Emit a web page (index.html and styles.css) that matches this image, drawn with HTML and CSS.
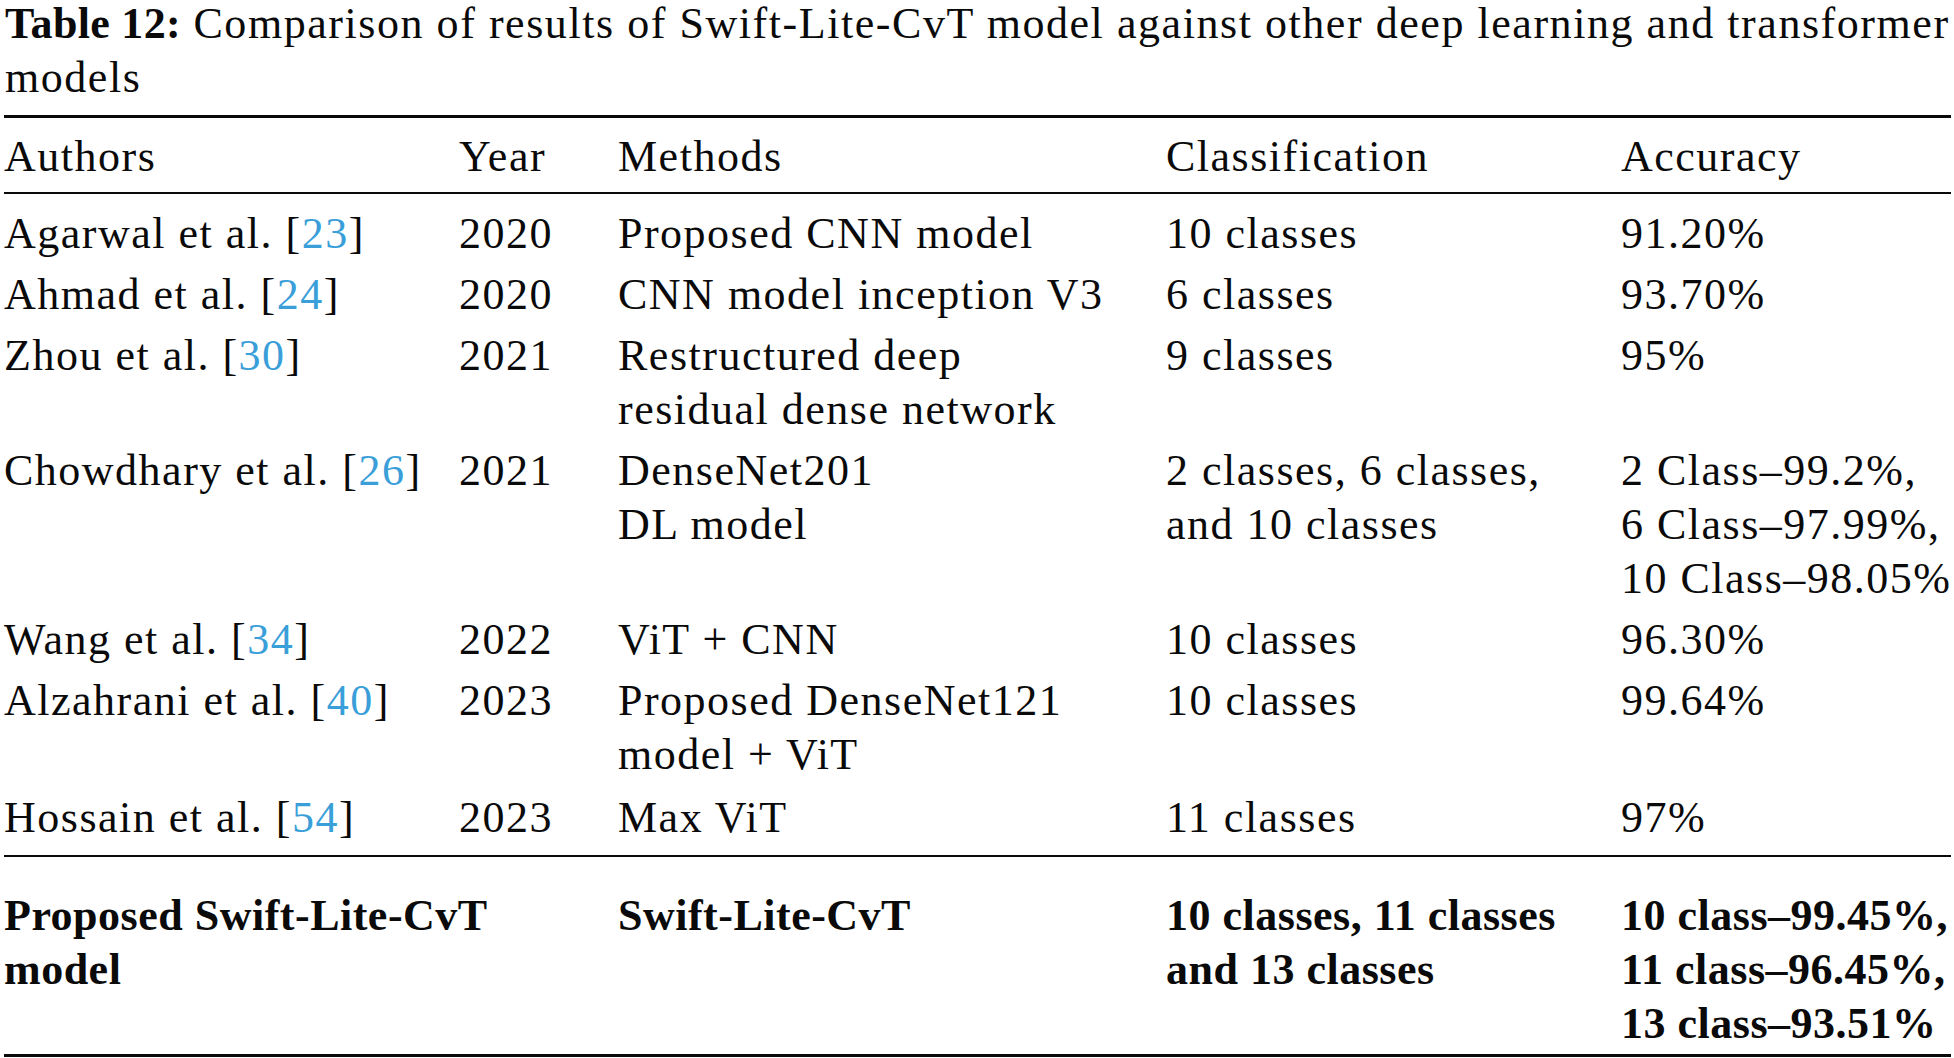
FILE: index.html
```html
<!DOCTYPE html>
<html>
<head>
<meta charset="utf-8">
<link rel="stylesheet" href="styles.css">
</head>
<body>
<div class="page">
  <p class="caption"><b>Table 12:</b> Comparison of results of Swift-Lite-CvT model against other deep learning and transformer<br>models</p>
  <table class="results">
    <colgroup>
      <col class="c-auth"><col class="c-year"><col class="c-meth"><col class="c-cls"><col class="c-acc">
    </colgroup>
    <thead>
      <tr><th>Authors</th><th>Year</th><th>Methods</th><th>Classification</th><th>Accuracy</th></tr>
    </thead>
    <tbody>
      <tr class="first"><td>Agarwal et al. [<span class="ref">23</span>]</td><td>2020</td><td>Proposed CNN model</td><td>10 classes</td><td>91.20%</td></tr>
      <tr><td>Ahmad et al. [<span class="ref">24</span>]</td><td>2020</td><td>CNN model inception V3</td><td>6 classes</td><td>93.70%</td></tr>
      <tr><td>Zhou et al. [<span class="ref">30</span>]</td><td>2021</td><td>Restructured deep<br>residual dense network</td><td>9 classes</td><td>95%</td></tr>
      <tr><td>Chowdhary et al. [<span class="ref">26</span>]</td><td>2021</td><td>DenseNet201<br>DL model</td><td>2 classes, 6 classes,<br>and 10 classes</td><td>2 Class–99.2%,<br>6 Class–97.99%,<br>10 Class–98.05%</td></tr>
      <tr><td>Wang et al. [<span class="ref">34</span>]</td><td>2022</td><td>ViT + CNN</td><td>10 classes</td><td>96.30%</td></tr>
      <tr><td>Alzahrani et al. [<span class="ref">40</span>]</td><td>2023</td><td>Proposed DenseNet121<br>model + ViT</td><td>10 classes</td><td>99.64%</td></tr>
      <tr class="last"><td>Hossain et al. [<span class="ref">54</span>]</td><td>2023</td><td>Max ViT</td><td>11 classes</td><td>97%</td></tr>
      <tr class="proposed"><td colspan="2">Proposed Swift-Lite-CvT<br>model</td><td>Swift-Lite-CvT</td><td>10 classes, 11 classes<br>and 13 classes</td><td>10 class–99.45%,<br>11 class–96.45%,<br>13 class–93.51%</td></tr>
    </tbody>
  </table>
</div>
</body>
</html>
```

FILE: styles.css
```css
html, body {
  margin: 0;
  padding: 0;
  background: #ffffff;
}

.page {
  padding: 0 3px 0 4px;
  font-family: "Liberation Serif", "Times New Roman", serif;
  font-size: 44px;
  line-height: 54px;
  color: #0a0a0a;
  letter-spacing: 1.5px;
}

.caption {
  margin: -3px 0 10px 1px;
  white-space: nowrap;
  letter-spacing: 1.55px;
}

.caption b {
  letter-spacing: 0.3px;
}

.results {
  width: 1947px;
  border-collapse: collapse;
  table-layout: fixed;
}

.c-auth { width: 455px; }
.c-year { width: 159px; }
.c-meth { width: 548px; }
.c-cls  { width: 455px; }
.c-acc  { width: 330px; }

.results th,
.results td {
  text-align: left;
  vertical-align: top;
  font-weight: normal;
  white-space: nowrap;
  padding: 3px 0 4px 0;
}

.results thead tr {
  border-top: 3px solid #0a0a0a;
  border-bottom: 2px solid #0a0a0a;
}

.results thead th {
  padding: 12px 0 8px 0;
}

.results tr.first td {
  padding-top: 13px;
}

.results tr.last td {
  padding-bottom: 10px;
  padding-top: 5px;
}

.results tr.proposed {
  border-top: 2px solid #0a0a0a;
  border-bottom: 3px solid #0a0a0a;
}

.results tr.proposed td {
  font-weight: bold;
  letter-spacing: 0.5px;
  padding: 32px 0 3px 0;
}

.ref {
  color: #3a9fd9;
}
```
